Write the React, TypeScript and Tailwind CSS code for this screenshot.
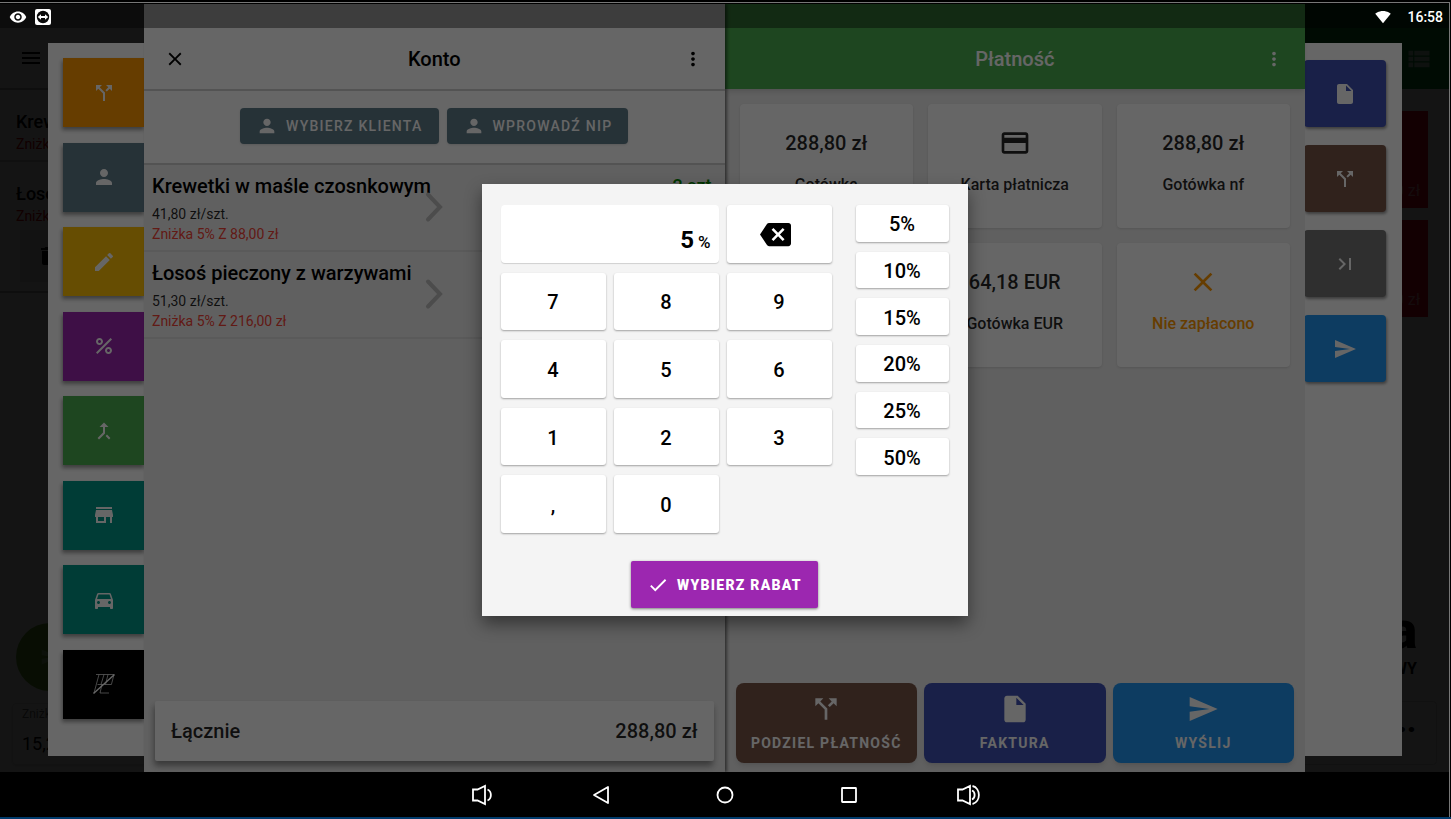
import type { ComponentType, ReactNode } from 'react'
import {
  MdBackspace, MdCallMerge, MdCallSplit, MdCheck, MdClose, MdCreditCard, MdDelete, MdDirectionsCar,
  MdEdit, MdInsertDriveFile, MdLastPage, MdMenu, MdMoreVert, MdPercent, MdPerson, MdSend,
  MdSignalWifi4Bar, MdStore, MdViewList, MdVisibility,
} from 'react-icons/md'

type Icon = ComponentType<{ className?: string }>

function NoTableIcon({ className }: { className?: string }) {
  return (
    <svg viewBox="0 0 24 24" className={className} fill="none" stroke="currentColor">
      <path strokeWidth="0.7" d="M4 2.5h18l-2.6 10H5.5M7 2.5 2 21M12 2.5 9 12.5M16 2.5l-2.5 10M10 12.5 8 21h9" />
      <path strokeWidth="1.4" d="M1.5 21.5 22.5 2.5" />
    </svg>
  )
}

function RemoteIcon({ className }: { className?: string }) {
  return (
    <svg viewBox="0 0 16 16" className={className}>
      <rect width="16" height="16" rx="2" fill="#fff" />
      <circle cx="8" cy="8" r="6.2" fill="#0a0a0a" />
      <path fill="#fff" d="M2.8 8 6 5.2v1.9h4V5.2L13.2 8 10 10.8V8.9H6v1.9z" />
    </svg>
  )
}

const sideActions: { label: string; icon: Icon; color: string }[] = [
  { label: 'Podziel', icon: MdCallSplit, color: 'bg-[#ff9800]' },
  { label: 'Klient', icon: MdPerson, color: 'bg-[#607d8b]' },
  { label: 'Edytuj', icon: MdEdit, color: 'bg-[#ffc107]' },
  { label: 'Rabat', icon: MdPercent, color: 'bg-[#9c27b0]' },
  { label: 'Połącz', icon: MdCallMerge, color: 'bg-[#4caf50]' },
  { label: 'Na miejscu', icon: MdStore, color: 'bg-[#009688]' },
  { label: 'Dostawa', icon: MdDirectionsCar, color: 'bg-[#009688]' },
  { label: 'Bez stolika', icon: NoTableIcon, color: 'bg-black' },
]

const payActions: { label: string; icon: Icon; color: string }[] = [
  { label: 'Faktura', icon: MdInsertDriveFile, color: 'bg-[#3f51b5]' },
  { label: 'Podziel płatność', icon: MdCallSplit, color: 'bg-[#795548]' },
  { label: 'Dalej', icon: MdLastPage, color: 'bg-[#757575]' },
  { label: 'Wyślij', icon: MdSend, color: 'bg-[#2196f3]' },
]

const items = [
  { name: 'Krewetki w maśle czosnkowym', price: '41,80 zł/szt.', discount: 'Zniżka 5% Z 88,00 zł', qty: '2 szt.' },
  { name: 'Łosoś pieczony z warzywami', price: '51,30 zł/szt.', discount: 'Zniżka 5% Z 216,00 zł', qty: '' },
]

const payments: { label: string; amount?: string; icon?: ReactNode; color: string }[] = [
  { label: 'Gotówka', amount: '288,80 zł', color: 'text-black/85' },
  { label: 'Karta płatnicza', icon: <MdCreditCard className="size-8" />, color: 'text-black/85' },
  { label: 'Gotówka nf', amount: '288,80 zł', color: 'text-black/85' },
  { label: 'Gotówka USD', amount: '72,20 USD', color: 'text-black/85' },
  { label: 'Gotówka EUR', amount: '64,18 EUR', color: 'text-black/85' },
  { label: 'Nie zapłacono', icon: <MdClose className="size-8" />, color: 'text-[#ff9800]' },
]

const keys = ['7', '8', '9', '4', '5', '6', '1', '2', '3', ',', '0']
const quickRates = ['5%', '10%', '15%', '20%', '25%', '50%']

// Order list and product grid behind the open bill
function HomeScreen() {
  return (
    <div className="absolute inset-0 flex overflow-hidden bg-white pt-6">
      <div className="flex w-[1244px] shrink-0 flex-col whitespace-nowrap">
        <div className="flex h-[62px] shrink-0 items-center border-b-2 border-black/30 px-[19px]">
          <button aria-label="Menu"><MdMenu className="size-6" /></button>
        </div>
        <div className="h-[72px] shrink-0 border-b-2 border-black/20 px-4 pt-5">
          <p className="text-lg leading-6 font-medium">Krewetki</p>
          <p className="text-sm leading-5 text-[#d50000]">Zniżka 5%</p>
        </div>
        <div className="h-[131px] shrink-0 border-b-2 border-black/30 px-4 pt-5">
          <p className="text-lg leading-6 font-medium">Łosoś</p>
          <p className="text-sm leading-5 text-[#d50000]">Zniżka 5%</p>
          <button aria-label="Usuń" className="mt-1 ml-1 flex h-[52px] w-20 items-center bg-black/10 pl-4">
            <MdDelete className="size-6" />
          </button>
        </div>
        <div className="mt-auto ml-4 flex size-[68px] shrink-0 items-center justify-center rounded-full bg-[#64a82a] text-white/40">
          <MdSend className="size-5" />
        </div>
        <div className="mt-3 mb-[7px] ml-3 h-[62px] w-56 shrink-0 rounded border border-black/10 px-[9px] shadow">
          <p className="text-xs leading-5 text-black/60">Zniżka</p>
          <p className="pt-2 text-lg leading-6">15,20 zł</p>
        </div>
      </div>
      <div className="-mt-6 flex flex-1 flex-col items-end">
        <div className="flex h-[85px] w-full shrink-0 items-center justify-end bg-[#008a30] pt-6 pr-4 text-white/70">
          <button aria-label="Lista"><MdViewList className="size-7" /></button>
        </div>
        <div className="mt-[22px] mr-[21px] flex h-[97px] w-36 items-end justify-end bg-[#f00020] px-2 pb-[5px] text-base text-white/60">0 zł</div>
        <div className="mt-3 mr-[21px] flex h-[97px] w-36 items-end justify-end bg-[#f00020] px-2 pb-[5px] text-base text-white/60">0 zł</div>
        <div className="mt-auto pr-8 text-right">
          <p className="text-[52px] leading-[52px] font-black">a</p>
          <p className="text-base leading-6 font-bold">WY</p>
        </div>
        <div className="mt-5 mr-3 mb-[7px] flex h-[64px] w-40 shrink-0 justify-end rounded border border-black/15 pr-5 text-3xl leading-10 font-black">...</div>
      </div>
      <div className="absolute inset-0 bg-black/80" />
    </div>
  )
}

function SideSheet() {
  return (
    <div className="absolute inset-0 flex pt-[39px] pr-[47px] pb-4 pl-12">
      <div className="flex flex-1 items-start justify-between bg-white">
        <div className="flex h-full flex-col justify-between pt-[15px] pb-[37px] pl-[15px]">
          {sideActions.map(({ label, icon: Glyph, color }) => (
            <button key={label} aria-label={label}
              className={`flex h-[69px] w-[82px] items-center justify-center text-white shadow-[-1px_3px_4px_rgba(0,0,0,0.4)] ${color}`}>
              <Glyph className="size-6" />
            </button>
          ))}
        </div>
        <div className="flex flex-col gap-[18px] pt-[17px] pr-4">
          {payActions.map(({ label, icon: Glyph, color }) => (
            <button key={label} aria-label={label}
              className={`flex h-[67px] w-[82px] items-center justify-center rounded text-white shadow-[1px_2px_3px_rgba(0,0,0,0.4)] ${color}`}>
              <Glyph className="size-6" />
            </button>
          ))}
        </div>
      </div>
    </div>
  )
}

function AccountPanel() {
  return (
    <section className="relative z-10 flex flex-col bg-[#f0f0f0] shadow-[2px_0_3px_rgba(0,0,0,0.5)]">
      <header className="flex h-[87px] shrink-0 items-center justify-between border-b-2 border-[#d0d0d0] bg-white px-5 pt-6">
        <button aria-label="Zamknij"><MdClose className="size-[22px]" /></button>
        <h1 className="text-xl font-medium">Konto</h1>
        <button aria-label="Więcej"><MdMoreVert className="size-[22px]" /></button>
      </header>
      <div className="flex h-[74px] shrink-0 items-start justify-center gap-2 border-b-2 border-[#d0d0d0] bg-white pt-[17px]">
        {['Wybierz klienta', 'Wprowadź NIP'].map(label => (
          <button key={label} className="flex h-9 items-center gap-2 rounded bg-[#607d8b] px-4 text-sm font-medium tracking-[0.09em] text-white uppercase shadow">
            <MdPerson className="size-[22px]" />
            {label}
          </button>
        ))}
      </div>
      <ul>
        {items.map(item => (
          <li key={item.name} className="relative flex h-[87px] justify-between border-b-2 border-[#e0e0e0] px-2 pt-[7px]">
            <div>
              <h2 className="text-xl leading-7 font-medium">{item.name}</h2>
              <p className="pt-1 text-sm leading-5 text-black/85">{item.price}</p>
              <p className="text-sm leading-5 text-[#f44336]">{item.discount}</p>
            </div>
            <span className="text-lg leading-7 font-medium text-[#008800]">{item.qty}</span>
            <svg viewBox="0 0 18 32" className="absolute top-[26px] left-1/2 h-8 w-[18px] -translate-x-1/2 text-[#bdbdbd]" fill="none" stroke="currentColor" strokeWidth="4" strokeLinecap="round">
              <path d="m3 3.5 12 12.5L3 28.5" />
            </svg>
          </li>
        ))}
      </ul>
      <div className="mx-[11px] mt-auto mb-[11px] flex h-[60px] items-center justify-between rounded-xs bg-white px-4 text-xl font-medium text-black/85 shadow-[-1px_5px_6px_rgba(0,0,0,0.4)]">
        <span>Łącznie</span>
        <span>288,80 zł</span>
      </div>
    </section>
  )
}

function PaymentPanel() {
  const actions = [
    { label: 'Podziel płatność', icon: MdCallSplit, color: 'bg-[#795548]' },
    { label: 'Faktura', icon: MdInsertDriveFile, color: 'bg-[#3f51b5]' },
    { label: 'Wyślij', icon: MdSend, color: 'bg-[#2196f3]' },
  ]
  return (
    <section className="flex flex-col bg-[#f0f0f0]">
      <header className="flex h-[85px] shrink-0 items-center justify-between bg-[#4caf50] px-5 pt-6 text-white shadow-md">
        <span className="w-[22px]" />
        <h1 className="text-xl font-medium">Płatność</h1>
        <button aria-label="Więcej"><MdMoreVert className="size-[22px]" /></button>
      </header>
      <div className="grid grid-cols-3 gap-[15px] p-[15px]">
        {payments.map(p => (
          <button key={p.label} className={`flex h-[124px] flex-col items-center rounded bg-white pt-[23px] shadow-sm ${p.color}`}>
            <span className="flex h-8 items-center text-xl font-medium">{p.amount ?? p.icon}</span>
            <span className="pt-[14px] text-base leading-6 font-medium">{p.label}</span>
          </button>
        ))}
      </div>
      <div className="mt-auto mb-[9px] grid grid-cols-3 gap-[7px] px-[11px]">
        {actions.map(({ label, icon: Glyph, color }) => (
          <button key={label} className={`flex h-20 flex-col items-center gap-2 rounded-lg pt-[10px] text-sm leading-5 font-bold tracking-[0.09em] text-white uppercase shadow-md ${color}`}>
            <Glyph className="size-8" />
            {label}
          </button>
        ))}
      </div>
    </section>
  )
}

function DiscountDialog() {
  const keyClass = 'flex items-center justify-center rounded-[3px] bg-white pt-[2px] text-xl font-medium shadow-[0_1px_2px_rgba(0,0,0,0.35)]'
  return (
    <div className="absolute inset-0 z-30 flex items-center justify-center bg-black/60 pt-6">
      <div role="dialog" aria-label="Rabat" className="w-[486px] bg-[#f4f4f4] px-[19px] pt-[21px] pb-2 shadow-[0_8px_16px_rgba(0,0,0,0.45)]">
        <div className="flex items-start justify-between">
          <div className="grid h-[328px] w-[331px] grid-cols-3 grid-rows-5 gap-x-2 gap-y-[10px]">
            <label className="col-span-2 flex items-baseline justify-end gap-1 rounded bg-white px-2 pt-[19px] shadow-[0_1px_1px_rgba(0,0,0,0.15)]">
              <input aria-label="Wartość rabatu" defaultValue="5" className="min-w-0 flex-1 text-right text-2xl font-bold outline-none" />
              <span className="text-[17px] font-medium">%</span>
            </label>
            <button aria-label="Cofnij" className={`${keyClass} pr-2`}><MdBackspace className="size-[31px]" /></button>
            {keys.map(k => <button key={k} className={keyClass}>{k}</button>)}
          </div>
          <div className="grid h-[270px] w-[93px] grid-rows-6 gap-[10px]">
            {quickRates.map(rate => <button key={rate} className={keyClass}>{rate}</button>)}
          </div>
        </div>
        <button className="mx-auto mt-7 flex h-[47px] items-center gap-2 rounded-xs bg-[#9c27b0] px-4 text-sm font-black tracking-[0.09em] text-white uppercase shadow-[0_1px_3px_rgba(0,0,0,0.5)]">
          <MdCheck className="size-[22px]" />
          Wybierz rabat
        </button>
      </div>
    </div>
  )
}

function StatusBar() {
  return (
    <div className="absolute inset-x-0 top-0 z-40 flex h-[25px] items-center gap-2 pr-[6px] pl-[9px] text-white">
      <MdVisibility className="size-[18px]" />
      <RemoteIcon className="size-4" />
      <MdSignalWifi4Bar className="ml-auto size-4" />
      <span className="pl-2 text-sm font-medium">16:58</span>
    </div>
  )
}

function NavBar() {
  return (
    <nav className="flex h-[45px] shrink-0 items-center justify-center gap-[97px] text-white">
      <button aria-label="Ciszej">
        <svg viewBox="0 0 24 24" className="size-6" fill="none" stroke="currentColor" strokeWidth="1.8">
          <path d="M3 6.5h4.5L15 3v18l-7.5-3.5H3zM17.500 6.5c4.500 2 4.500 9 0 11" />
        </svg>
      </button>
      <div className="flex gap-[104px]">
        <button aria-label="Wstecz">
          <svg viewBox="0 0 20 20" className="size-5" fill="none" stroke="currentColor" strokeWidth="1.8" strokeLinejoin="round">
            <path d="M17 2v16L3 10z" />
          </svg>
        </button>
        <button aria-label="Ekran główny">
          <svg viewBox="0 0 20 20" className="size-5" fill="none" stroke="currentColor" strokeWidth="1.8">
            <circle cx="10" cy="10" r="7.5" />
          </svg>
        </button>
        <button aria-label="Ostatnie">
          <svg viewBox="0 0 20 20" className="size-5" fill="none" stroke="currentColor" strokeWidth="1.8">
            <rect x="3" y="3" width="14" height="14" rx="0.5" />
          </svg>
        </button>
      </div>
      <button aria-label="Głośniej">
        <svg viewBox="0 0 24 24" className="size-6" fill="none" stroke="currentColor" strokeWidth="1.8">
          <path d="M2 6.5h4.5L14 3v18l-7.5-3.5H2zM16 7.5c3.500 1.500 3.500 7.500 0 9M16.500 3c8.500 2 8.500 16 0 18" />
        </svg>
      </button>
    </nav>
  )
}

export default function App() {
  return (
    <div className="flex h-screen flex-col bg-black pt-[2px] font-[Roboto,sans-serif] text-black">
      <div className="mr-px flex min-h-0 flex-1 flex-col border-t border-r border-[#777] pt-px">
        <div className="relative min-h-0 flex-1 overflow-hidden">
          <HomeScreen />
          <SideSheet />
          <main className="absolute inset-0 mx-36 grid grid-cols-2">
            <AccountPanel />
            <PaymentPanel />
          </main>
          <div className="absolute inset-x-0 top-0 z-20 h-6 bg-black/40" />
          <DiscountDialog />
          <StatusBar />
        </div>
        <NavBar />
      </div>
      <div className="h-[2px] shrink-0 bg-[#003a6b]" />
    </div>
  )
}
